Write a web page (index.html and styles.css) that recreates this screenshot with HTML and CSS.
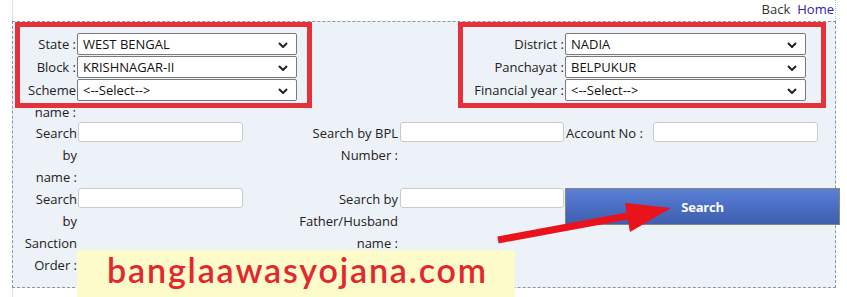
FILE: index.html
```html
<!DOCTYPE html>
<html>
<head>
<meta charset="utf-8">
<link rel="stylesheet" href="styles.css">
</head>
<body>
<div class="screen">
  <div class="page">
    <div class="toplinks"><span class="back">Back</span><a class="home">Home</a></div>
    <div class="panel">
      <div class="topgrid">
        <label class="lbl">State&nbsp;:</label>
        <div class="sel"><span>WEST BENGAL</span><svg class="chev" viewBox="0 0 10 6"><path d="M1 1l4 4 4-4"/></svg></div>
        <label class="lbl">District&nbsp;:</label>
        <div class="sel"><span>NADIA</span><svg class="chev" viewBox="0 0 10 6"><path d="M1 1l4 4 4-4"/></svg></div>

        <label class="lbl">Block&nbsp;:</label>
        <div class="sel"><span>KRISHNAGAR-II</span><svg class="chev" viewBox="0 0 10 6"><path d="M1 1l4 4 4-4"/></svg></div>
        <label class="lbl">Panchayat&nbsp;:</label>
        <div class="sel"><span>BELPUKUR</span><svg class="chev" viewBox="0 0 10 6"><path d="M1 1l4 4 4-4"/></svg></div>

        <label class="lbl">Scheme name&nbsp;:</label>
        <div class="sel"><span>&lt;--Select--&gt;</span><svg class="chev" viewBox="0 0 10 6"><path d="M1 1l4 4 4-4"/></svg></div>
        <label class="lbl">Financial year&nbsp;:</label>
        <div class="sel"><span>&lt;--Select--&gt;</span><svg class="chev" viewBox="0 0 10 6"><path d="M1 1l4 4 4-4"/></svg></div>
      </div>

      <div class="searchgrid">
        <div class="lbl c1">Search by name&nbsp;:</div>
        <input class="txt w165" type="text">
        <div class="lbl c3">Search by BPL Number&nbsp;:</div>
        <input class="txt w164" type="text">
        <div class="lbl c5">Account No&nbsp;:</div>
        <input class="txt w165" type="text">

        <div class="lbl c1">Search by Sanction Order&nbsp;:</div>
        <input class="txt w165" type="text">
        <div class="lbl c3">Search by Father/Husband name&nbsp;:</div>
        <input class="txt w164" type="text">
        <button class="btn" type="button">Search</button>
      </div>
    </div>
  </div>

  <div class="mark mark-left"></div>
  <div class="mark mark-right"></div>

  <svg class="arrow" width="847" height="297" viewBox="0 0 847 297">
    <path class="shaft" d="M498 240 L633 215"/>
    <polygon class="head" points="625,203 671,208 630,232"/>
  </svg>

  <div class="watermark">banglaawasyojana.com</div>
</div>
</body>
</html>
```

FILE: styles.css
```css
* { box-sizing: border-box; }

html, body {
  margin: 0;
  padding: 0;
  background: #ffffff;
}

.screen {
  position: relative;
  width: 847px;
  height: 297px;
  overflow: hidden;
  font-family: "Open Sans", "Noto Sans", sans-serif;
  font-size: 13px;
  color: #222;
}

.page {
  margin-left: 12px;
  width: 824px;
  height: 297px;
  border-left: 1px solid #dcdfe5;
}

.toplinks {
  height: 21px;
  display: flex;
  justify-content: flex-end;
  align-items: center;
  gap: 7px;
  padding-right: 1px;
  padding-bottom: 3px;
  border-right: 1px dotted #b8c0cc;
}

.back { color: #333; }
.home { color: #2b22b0; }

.panel {
  margin-left: -1px;
  width: 824px;
  height: 267px;
  border: 1px dashed #8796ab;
  background: #edf1f8;
  padding-top: 11px;
}

.lbl {
  line-height: 22px;
  text-align: right;
  color: #222;
  white-space: normal;
}

.topgrid {
  display: grid;
  grid-template-columns: 64px 220px 268px 241px;
  grid-template-rows: 23px 23px 23px;
}

.topgrid .lbl { padding-right: 1px; }

.sel {
  position: relative;
  height: 22px;
  background: #fff;
  border: 1px solid #7a7a7a;
  border-radius: 2px;
  display: flex;
  align-items: center;
  padding-left: 5px;
  color: #111;
}

.chev {
  position: absolute;
  right: 8px;
  top: 8px;
  width: 10px;
  height: 6px;
}

.chev path {
  fill: none;
  stroke: #222;
  stroke-width: 2;
}

.searchgrid {
  margin-top: 20px;
  display: grid;
  grid-template-columns: 64px 166px 156px 165px 88px 166px;
  grid-auto-rows: auto;
  align-items: start;
}

.searchgrid .c1 { padding-left: 10px; }
.searchgrid .c3 { padding-left: 50px; padding-right: 1px; }
.searchgrid .c5 { text-align: left; padding-left: 2px; }

.txt {
  margin: 0 0 0 1px;
  height: 20px;
  border: 1px solid #cacaca;
  border-radius: 3px;
  background: #fff;
  padding: 0 4px;
  font: inherit;
}

.w165 { width: 165px; }
.w164 { width: 164px; }

.btn {
  grid-column: 5 / span 2;
  margin-left: 1px;
  width: 275px;
  height: 37px;
  border: 1px solid #8a8478;
  background: linear-gradient(180deg, #5a80d4 0%, #4a6ec4 50%, #3f5fae 100%);
  color: #fff;
  font-family: "Open Sans", sans-serif;
  font-weight: 700;
  font-size: 13px;
  letter-spacing: -0.2px;
  padding: 0;
}

.mark {
  position: absolute;
  border: 5px solid #e5323a;
  pointer-events: none;
}

.mark-left { left: 15px; top: 22px; width: 297px; height: 86px; }
.mark-right { left: 458px; top: 22px; width: 368px; height: 86px; }

.arrow {
  position: absolute;
  left: 0;
  top: 0;
  pointer-events: none;
}

.shaft {
  stroke: #e8131b;
  stroke-width: 7;
  fill: none;
}

.head { fill: #e8131b; }

.watermark {
  position: absolute;
  left: 77px;
  top: 250px;
  width: 438px;
  height: 47px;
  background: #fdfbca;
  color: #e3272f;
  font-family: "Lato", sans-serif;
  font-weight: 600;
  font-size: 34px;
  line-height: 40px;
  padding-left: 30px;
  letter-spacing: 1.85px;
}
```
